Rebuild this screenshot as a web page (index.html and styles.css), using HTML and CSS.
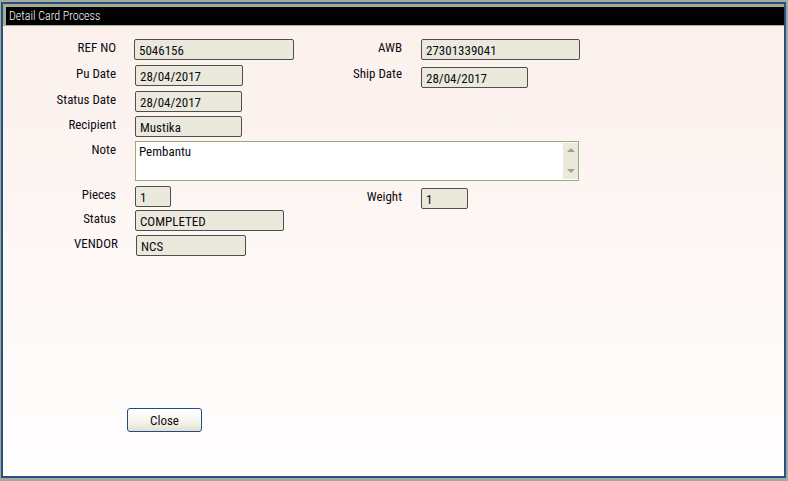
FILE: index.html
```html
<!DOCTYPE html>
<html>
<head>
<meta charset="utf-8">
<link rel="stylesheet" href="styles.css">
</head>
<body>
<div class="window">
  <div class="titlewrap"><div class="titlebar">Detail Card Process</div></div>
  <div class="content">
    <div class="form">
      <span class="label">REF NO</span><span class="field w160">5046156</span>
      <span class="label">AWB</span><span class="field w159">27301339041</span>

      <span class="label">Pu Date</span><span class="field w108">28/04/2017</span>
      <span class="label">Ship Date</span><span class="field w107 down2">28/04/2017</span>

      <span class="label">Status Date</span><span class="field w107">28/04/2017</span>
      <span class="empty"></span><span class="empty"></span>

      <span class="label">Recipient</span><span class="field w107">Mustika</span>
      <span class="empty"></span><span class="empty"></span>

      <span class="label">Note</span>
      <div class="note">
        <div class="note-text">Pembantu</div>
        <div class="scroll">
          <span class="arrow up"></span>
          <span class="arrow dn"></span>
        </div>
      </div>

      <span class="label">Pieces</span><span class="field w36">1</span>
      <span class="label down2">Weight</span><span class="field w47 down2">1</span>

      <span class="label">Status</span><span class="field w149">COMPLETED</span>
      <span class="empty"></span><span class="empty"></span>

      <span class="label vendor">VENDOR</span><span class="field w110 right1">NCS</span>
      <span class="empty"></span><span class="empty"></span>
    </div>
    <div class="actions"><button class="btn" type="button">Close</button></div>
  </div>
</div>
</body>
</html>
```

FILE: styles.css
```css
html, body {
  margin: 0;
  padding: 0;
}
body {
  background: #aca899;
  width: 788px;
  height: 481px;
  overflow: hidden;
  font-family: "Roboto Condensed", "Liberation Sans", Arial, sans-serif;
  font-size: 13px;
  font-weight: 400;
  color: #0c0c14;
}
.window {
  margin: 2px 2px 3px 1px;
  height: 476px;
  box-sizing: border-box;
  border: 2px solid #1f5487;
  display: flex;
  flex-direction: column;
}
.titlewrap {
  background: #aca899;
  padding: 2px 0 0 2px;
}
.titlebar {
  background: #000;
  color: #fff;
  border: 1px solid #a2b488;
  border-right: 0;
  height: 18px;
  line-height: 18px;
  padding-left: 3px;
  font-size: 12px;
  font-weight: 300;
}
.content {
  flex: 1;
  background: linear-gradient(#fbf0ec, #fffefe);
  padding-top: 13px;
}
.form {
  display: grid;
  grid-template-columns: 132px 160px 126px 1fr;
  grid-template-rows: 26px 26px 25px 25px 45px 24px 25px 21px;
  align-items: start;
}
.label {
  text-align: right;
  padding-right: 19px;
  line-height: 16px;
  padding-top: 1px;
  white-space: nowrap;
}
.label.vendor {
  padding-right: 17px;
}
.field {
  box-sizing: border-box;
  height: 21px;
  background: #ebe9db;
  border: 1px solid #4e4e4e;
  border-radius: 2px;
  padding: 3px 0 0 4px;
  line-height: 16px;
  white-space: nowrap;
}
.down2 { margin-top: 2px; }
.right1 { margin-left: 1px; }
.w160 { width: 160px; margin-left: -1px; }
.w159 { width: 159px; }
.w108 { width: 108px; }
.w107 { width: 107px; }
.w36 { width: 36px; }
.w47 { width: 47px; }
.w149 { width: 149px; }
.w110 { width: 110px; }
.note {
  grid-column: 2 / 5;
  width: 444px;
  height: 40px;
  box-sizing: border-box;
  border: 1px solid #97ad79;
  background: #fff;
  display: flex;
}
.note-text {
  flex: 1;
  padding: 2px 0 0 3px;
  line-height: 16px;
}
.scroll {
  width: 15px;
  margin: 1px 0;
  background: #ebe9dc;
  display: flex;
  flex-direction: column;
  justify-content: space-between;
  align-items: center;
  padding: 5px 0 6px;
  box-sizing: border-box;
}
.arrow {
  width: 0;
  height: 0;
  border-left: 4px solid transparent;
  border-right: 4px solid transparent;
}
.arrow.up { border-bottom: 4px solid #a3a08f; }
.arrow.dn { border-top: 4px solid #a3a08f; }
.actions {
  margin-top: 152px;
  padding-left: 124px;
}
.btn {
  width: 75px;
  height: 24px;
  border: 1px solid #1d4f86;
  border-radius: 3px;
  background: linear-gradient(#ffffff, #f6f4ec 55%, #e4e0cf);
  font-family: "Roboto Condensed", "Liberation Sans", Arial, sans-serif;
  font-size: 13px;
  font-weight: 400;
  color: #0c0c14;
  padding: 0;
  margin: 0;
}
```
